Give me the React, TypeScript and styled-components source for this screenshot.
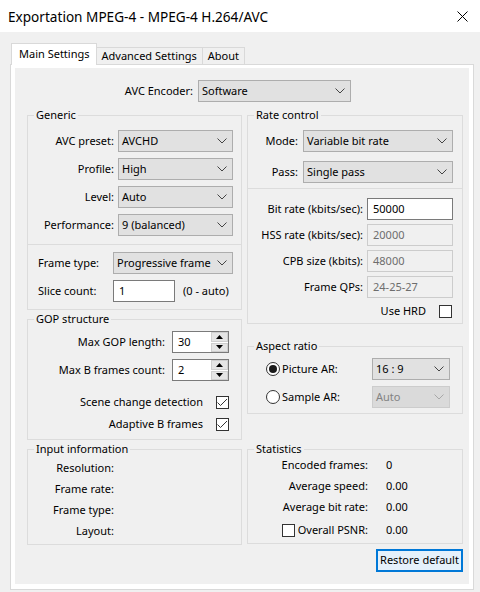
import React from 'react'
import styled, { createGlobalStyle } from 'styled-components'

const GlobalStyle = createGlobalStyle`
  html, body {
    margin: 0;
    background: #f0f0f0;
  }
  body {
    font-family: "Noto Sans", "Liberation Sans", sans-serif;
    font-size: 11px;
    color: #000;
  }
  * {
    box-sizing: border-box;
  }
`

const Window = styled.div`
  width: 480px;
  height: 592px;
  display: flex;
  flex-direction: column;
  background: #f0f0f0;
  overflow: hidden;
`

const TitleBar = styled.div`
  height: 32px;
  flex: none;
  display: flex;
  align-items: center;
  justify-content: space-between;
  padding: 0 12px 0 8px;
  background: #fff;
  font-size: 13.6px;
`

const Body = styled.div`
  padding: 11px 6px 0 10px;
`

const TabStrip = styled.div`
  display: flex;
  align-items: flex-end;
  height: 21px;
  padding-left: 1px;
`

const Tab = styled.div<{ $active?: boolean }>`
  height: ${p => (p.$active ? '22px' : '17px')};
  margin-bottom: ${p => (p.$active ? '-1px' : '0')};
  margin-left: ${p => (p.$active ? '0' : '-1px')};
  position: relative;
  z-index: ${p => (p.$active ? 1 : 0)};
  display: flex;
  align-items: center;
  padding: ${p => (p.$active ? '0 6px 2px 7px' : '0 5px 1px')};
  border: 1px solid #d9d9d9;
  border-bottom: none;
  background: ${p => (p.$active ? '#fff' : '#f0f0f0')};
  white-space: nowrap;
`

const TabPage = styled.div`
  height: 526px;
  border: 1px solid #d9d9d9;
  background: #fff;
  padding: 3px 4px 5px 4px;
`

const PageInner = styled.div`
  height: 100%;
  background: #f0f0f0;
  padding: 12px 6px 0 12px;
`

const EncoderRow = styled.div`
  display: grid;
  grid-template-columns: 166px 153px;
  column-gap: 5px;
  align-items: center;
  height: 22px;
`

const Columns = styled.div`
  display: grid;
  grid-template-columns: 215px 216px;
  column-gap: 5px;
  margin-top: 5px;
  align-items: start;
`

const Column = styled.div`
  display: flex;
  flex-direction: column;
`

const Group = styled.fieldset<{ $gap?: number }>`
  margin: ${p => p.$gap ?? 0}px 0 0 0;
  padding: 0;
  min-width: 0;
  border: 1px solid #dcdcdc;
`

const Legend = styled.legend`
  margin-left: 6px;
  padding: 0 2px;
  line-height: 16px;
`

const Divided = styled.div`
  border-top: 1px solid #dcdcdc;
`

const FormGrid = styled.div<{ $cols: string; $colGap: number; $rowGap: number; $pad: string; $rows?: string }>`
  display: grid;
  grid-template-columns: ${p => p.$cols};
  ${p => (p.$rows ? `grid-template-rows: ${p.$rows};` : 'grid-auto-rows: 22px;')}
  column-gap: ${p => p.$colGap}px;
  row-gap: ${p => p.$rowGap}px;
  padding: ${p => p.$pad};
  align-items: center;
`

const Label = styled.span<{ $left?: boolean }>`
  justify-self: ${p => (p.$left ? 'start' : 'end')};
  padding-bottom: 2px;
  white-space: nowrap;
`

const Value = styled.span`
  padding-bottom: 2px;
  white-space: nowrap;
`

const ComboBox = styled.div<{ $disabled?: boolean }>`
  height: 22px;
  display: flex;
  align-items: center;
  padding-left: 3px;
  border: 1px solid ${p => (p.$disabled ? '#cccccc' : '#adadad')};
  background: ${p => (p.$disabled ? '#dadada' : '#e1e1e1')};
  color: ${p => (p.$disabled ? '#838383' : '#000')};
  white-space: nowrap;
  overflow: hidden;
`

const ComboText = styled.span`
  flex: 1;
  padding-bottom: 2px;
`

const Chevron = styled.svg`
  flex: none;
  margin-right: 5px;
`

const TextBox = styled.div<{ $disabled?: boolean; $width?: number }>`
  height: 22px;
  width: ${p => (p.$width ? `${p.$width}px` : 'auto')};
  display: flex;
  align-items: center;
  padding: 0 0 2px 5px;
  border: 1px solid ${p => (p.$disabled ? '#cccccc' : '#7a7a7a')};
  background: ${p => (p.$disabled ? '#f0f0f0' : '#fff')};
  color: ${p => (p.$disabled ? '#6d6d6d' : '#000')};
`

const InlineRow = styled.div`
  display: flex;
  align-items: center;
  gap: 8px;
`

const Hint = styled.span`
  padding-bottom: 2px;
`

const RightStack = styled.div<{ $pad: string }>`
  display: flex;
  flex-direction: column;
  align-items: flex-end;
  padding: ${p => p.$pad};
`

const Row = styled.div<{ $gap: number; $top?: number; $height?: number }>`
  display: flex;
  align-items: center;
  gap: ${p => p.$gap}px;
  height: ${p => p.$height ?? 22}px;
  margin-top: ${p => p.$top ?? 0}px;
  white-space: nowrap;
`

const RowText = styled.span`
  padding-bottom: 2px;
`

const Spin = styled.div`
  width: 57px;
  height: 22px;
  display: flex;
  border: 1px solid #7a7a7a;
  background: #fff;
`

const SpinText = styled.div`
  flex: 1;
  display: flex;
  align-items: center;
  padding: 0 0 2px 5px;
`

const SpinButtons = styled.div`
  width: 17px;
  display: flex;
  flex-direction: column;
  gap: 1px;
  background: #fff;
`

const SpinButton = styled.div`
  flex: 1;
  display: flex;
  align-items: center;
  justify-content: center;
  background: #e5e5e5;
  border: 1px solid #cfcfcf;
`

const Box = styled.span`
  width: 13px;
  height: 13px;
  flex: none;
  display: inline-flex;
  align-items: center;
  justify-content: center;
  border: 1px solid #333;
  background: #fff;
`

const Radio = styled.span<{ $on?: boolean }>`
  width: 14px;
  height: 14px;
  flex: none;
  display: inline-flex;
  align-items: center;
  justify-content: center;
  border: 1px solid #333;
  border-radius: 50%;
  background: #fff;
  &::after {
    content: '';
    width: 8px;
    height: 8px;
    border-radius: 50%;
    background: ${p => (p.$on ? '#1a1a1a' : 'transparent')};
  }
`

const RadioLabel = styled.span`
  display: flex;
  align-items: center;
  gap: 2px;
  white-space: nowrap;
`

const CheckLabel = styled.span`
  justify-self: end;
  display: flex;
  align-items: center;
  gap: 3px;
  white-space: nowrap;
`

const Button = styled.div`
  align-self: flex-end;
  margin-top: 5px;
  width: 87px;
  height: 23px;
  display: flex;
  align-items: center;
  justify-content: center;
  padding-bottom: 2px;
  border: 1px solid #0078d7;
  box-shadow: inset 0 0 0 1px #0078d7;
  background: #e5f1fb;
  white-space: nowrap;
`

function Combo({ value, disabled }: { value: string; disabled?: boolean }) {
  return (
    <ComboBox $disabled={disabled}>
      <ComboText>{value}</ComboText>
      <Chevron width="10" height="6" viewBox="0 0 10 6">
        <polyline points="0.5,0.5 5,5 9.5,0.5" fill="none" stroke={disabled ? '#a8a8a8' : '#444'} strokeWidth="1" />
      </Chevron>
    </ComboBox>
  )
}

function Check({ checked }: { checked?: boolean }) {
  return (
    <Box>
      {checked ? (
        <svg width="11" height="9" viewBox="0 0 11 9">
          <polyline points="0.5,4.5 3.5,7.5 10,1" fill="none" stroke="#333" strokeWidth="1" />
        </svg>
      ) : null}
    </Box>
  )
}

function SpinBox({ value }: { value: string }) {
  return (
    <Spin>
      <SpinText>{value}</SpinText>
      <SpinButtons>
        <SpinButton>
          <svg width="7" height="4" viewBox="0 0 7 4"><polygon points="0,4 3.5,0 7,4" fill="#000" /></svg>
        </SpinButton>
        <SpinButton>
          <svg width="7" height="4" viewBox="0 0 7 4"><polygon points="0,0 3.5,4 7,0" fill="#000" /></svg>
        </SpinButton>
      </SpinButtons>
    </Spin>
  )
}

function App() {
  return (
    <Window>
      <GlobalStyle />
      <TitleBar>
        <span>Exportation MPEG-4 - MPEG-4 H.264/AVC</span>
        <svg width="11" height="11" viewBox="0 0 11 11">
          <path d="M0.5 0.5 L10.5 10.5 M10.5 0.5 L0.5 10.5" stroke="#000" strokeWidth="1" />
        </svg>
      </TitleBar>
      <Body>
        <TabStrip>
          <Tab $active>Main Settings</Tab>
          <Tab>Advanced Settings</Tab>
          <Tab>About</Tab>
        </TabStrip>
        <TabPage>
          <PageInner>
            <EncoderRow>
              <Label>AVC Encoder:</Label>
              <Combo value="Software" />
            </EncoderRow>
            <Columns>
              <Column>
                <Group>
                  <Legend>Generic</Legend>
                  <FormGrid $cols="86px 115px" $colGap={4} $rowGap={6} $pad="7px 0 8px 0">
                    <Label>AVC preset:</Label>
                    <Combo value="AVCHD" />
                    <Label>Profile:</Label>
                    <Combo value="High" />
                    <Label>Level:</Label>
                    <Combo value="Auto" />
                    <Label>Performance:</Label>
                    <Combo value="9 (balanced)" />
                  </FormGrid>
                  <Divided>
                    <FormGrid $cols="75px 120px" $colGap={0} $rowGap={6} $pad="7px 0 7px 10px">
                      <Label $left>Frame type:</Label>
                      <Combo value="Progressive frame" />
                      <Label $left>Slice count:</Label>
                      <InlineRow>
                        <TextBox $width={62}>1</TextBox>
                        <Hint>(0 - auto)</Hint>
                      </InlineRow>
                    </FormGrid>
                  </Divided>
                </Group>
                <Group $gap={1}>
                  <Legend>GOP structure</Legend>
                  <RightStack $pad="4px 12px 4px 0">
                    <Row $gap={7}>
                      <RowText>Max GOP length:</RowText>
                      <SpinBox value="30" />
                    </Row>
                    <Row $gap={7} $top={6}>
                      <RowText>Max B frames count:</RowText>
                      <SpinBox value="2" />
                    </Row>
                    <Row $gap={13} $top={10}>
                      <RowText>Scene change detection</RowText>
                      <Check checked />
                    </Row>
                    <Row $gap={13}>
                      <RowText>Adaptive B frames</RowText>
                      <Check checked />
                    </Row>
                  </RightStack>
                </Group>
                <Group $gap={1}>
                  <Legend>Input information</Legend>
                  <FormGrid $cols="86px" $colGap={0} $rowGap={0} $pad="1px 0 2px 0" $rows="21px 21px 21px 21px">
                    <Label>Resolution:</Label>
                    <Label>Frame rate:</Label>
                    <Label>Frame type:</Label>
                    <Label>Layout:</Label>
                  </FormGrid>
                </Group>
              </Column>
              <Column>
                <Group>
                  <Legend>Rate control</Legend>
                  <FormGrid $cols="50px 150px" $colGap={5} $rowGap={9} $pad="7px 9px 5px 0">
                    <Label>Mode:</Label>
                    <Combo value="Variable bit rate" />
                    <Label>Pass:</Label>
                    <Combo value="Single pass" />
                  </FormGrid>
                  <Divided>
                    <FormGrid $cols="115px 86px" $colGap={4} $rowGap={4} $pad="9px 9px 0 0">
                      <Label>Bit rate (kbits/sec):</Label>
                      <TextBox>50000</TextBox>
                      <Label>HSS rate (kbits/sec):</Label>
                      <TextBox $disabled>20000</TextBox>
                      <Label>CPB size (kbits):</Label>
                      <TextBox $disabled>48000</TextBox>
                      <Label>Frame QPs:</Label>
                      <TextBox $disabled>24-25-27</TextBox>
                    </FormGrid>
                    <RightStack $pad="2px 10px 1px 0">
                      <Row $gap={13}>
                        <RowText>Use HRD</RowText>
                        <Check />
                      </Row>
                    </RightStack>
                  </Divided>
                </Group>
                <Group $gap={14}>
                  <Legend>Aspect ratio</Legend>
                  <FormGrid $cols="1fr 78px" $colGap={0} $rowGap={6} $pad="4px 12px 5px 18px">
                    <RadioLabel>
                      <Radio $on />
                      <RowText>Picture AR:</RowText>
                    </RadioLabel>
                    <Combo value="16 : 9" />
                    <RadioLabel>
                      <Radio />
                      <RowText>Sample AR:</RowText>
                    </RadioLabel>
                    <Combo value="Auto" disabled />
                  </FormGrid>
                </Group>
                <Group $gap={27}>
                  <Legend>Statistics</Legend>
                  <FormGrid $cols="120px auto" $colGap={18} $rowGap={4} $pad="0 0 3px 0" $rows="17px 17px 17px 20px">
                    <Label>Encoded frames:</Label>
                    <Value>0</Value>
                    <Label>Average speed:</Label>
                    <Value>0.00</Value>
                    <Label>Average bit rate:</Label>
                    <Value>0.00</Value>
                    <CheckLabel>
                      <Check />
                      <RowText>Overall PSNR:</RowText>
                    </CheckLabel>
                    <Value>0.00</Value>
                  </FormGrid>
                </Group>
                <Button>Restore default</Button>
              </Column>
            </Columns>
          </PageInner>
        </TabPage>
      </Body>
    </Window>
  )
}

export default App
